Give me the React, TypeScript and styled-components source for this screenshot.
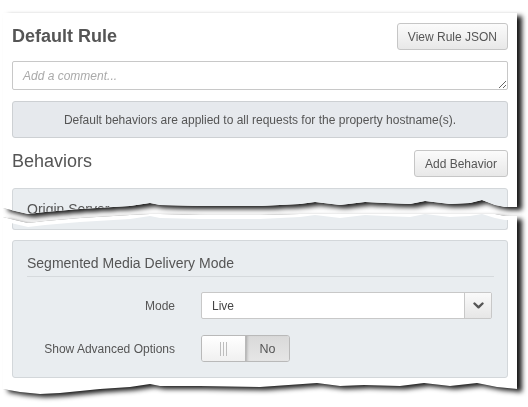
import styled, { createGlobalStyle } from "styled-components";

const GlobalStyle = createGlobalStyle`
  body {
    margin: 0;
    background: #fff;
    font-family: "Liberation Sans", Arial, sans-serif;
    color: #555;
  }
`;

// torn edge of the upper sheet, in page coordinates
const tear: [number, number][] = [
  [3, 208], [15, 211], [28, 214], [45, 212], [80, 209], [130, 206],
  [150, 203], [160, 205], [200, 206], [260, 206], [300, 204], [315, 202],
  [340, 205], [365, 202], [385, 203], [410, 204], [425, 201], [450, 204],
  [470, 203], [482, 200], [495, 205], [505, 207], [517, 207],
];

// torn edge at the bottom of the lower sheet
const bottomTear: [number, number][] = [
  [3, 389], [20, 392], [40, 394], [60, 393], [100, 389], [130, 387],
  [150, 384], [160, 386], [200, 386], [260, 387], [317, 383], [340, 386],
  [364, 385], [400, 386], [424, 383], [450, 386], [477, 383], [497, 387],
  [517, 389],
];

const pts = (list: [number, number][], dx: number, dy: number) =>
  list.map(([x, y]) => `${x - dx}px ${Math.max(0, y - dy)}px`);

const SHEET_LEFT = 3;
const TOP_SHEET_TOP = 13;
const LOWER_TOP = 214;

const topClip = `polygon(0px 0px, 514px 0px, ${pts(tear, SHEET_LEFT, TOP_SHEET_TOP)
  .reverse()
  .join(", ")})`;

const lowerClip = `polygon(${pts(tear, SHEET_LEFT, LOWER_TOP - 9).join(", ")}, ${pts(
  bottomTear,
  SHEET_LEFT,
  LOWER_TOP
)
  .reverse()
  .join(", ")})`;

const tailClip = `polygon(${pts(tear, 12, LOWER_TOP - 13).join(", ")}, 496px 16px, 0px 16px)`;

const Page = styled.div`
  width: 528px;
  height: 407px;
  box-sizing: border-box;
  padding: ${TOP_SHEET_TOP}px 0 0 ${SHEET_LEFT}px;
  overflow: hidden;
  display: flex;
  flex-direction: column;
`;

const SheetShadow = styled.div<{ $front?: boolean }>`
  width: 514px;
  flex-shrink: 0;
  position: relative;
  z-index: ${(p) => (p.$front ? 2 : 1)};
  filter: drop-shadow(0 0 0.7px rgba(0, 0, 0, 0.4))
    drop-shadow(5px 3px 2.5px rgba(0, 0, 0, 0.9));
`;

const Sheet = styled.div<{ $clip: string; $height: number }>`
  background: #fff;
  height: ${(p) => p.$height}px;
  box-sizing: border-box;
  padding: 0 9px;
  display: flex;
  flex-direction: column;
  overflow: hidden;
  clip-path: ${(p) => p.$clip};

  & > * {
    flex-shrink: 0;
  }
`;

const HeaderRow = styled.div<{ $top: number }>`
  display: flex;
  justify-content: space-between;
  align-items: center;
  height: 27px;
  margin-top: ${(p) => p.$top}px;
`;

const Title = styled.h1`
  margin: 0;
  font-size: 18px;
  font-weight: bold;
  color: #555;
`;

const SectionTitle = styled.h2`
  margin: 0 0 5px;
  font-size: 18px;
  font-weight: normal;
  color: #555;
`;

const Button = styled.button`
  height: 27px;
  padding: 0 10px;
  border: 1px solid #c6c6c6;
  border-radius: 3px;
  background: linear-gradient(#fbfbfb, #e8e8e8);
  font-family: "Liberation Sans", Arial, sans-serif;
  font-size: 12px;
  color: #555;
`;

const Comment = styled.textarea`
  display: block;
  box-sizing: border-box;
  width: 100%;
  height: 29px;
  min-height: 29px;
  margin-top: 11px;
  padding: 7px 10px;
  border: 1px solid #c8c8c8;
  border-radius: 2px;
  font-family: "Liberation Sans", Arial, sans-serif;
  font-size: 12px;
  color: #555;
  overflow: hidden;

  &::placeholder {
    color: #aaa;
    font-style: italic;
  }
`;

const Notice = styled.div`
  margin-top: 11px;
  height: 37px;
  box-sizing: border-box;
  display: flex;
  align-items: center;
  justify-content: center;
  background: #e6e9ed;
  border: 1px solid #cdd0d3;
  border-radius: 3px;
  font-size: 12px;
  color: #555;
`;

const Card = styled.div<{ $top: number }>`
  margin-top: ${(p) => p.$top}px;
  background: #e9edf0;
  border: 1px solid #d3d7da;
  border-radius: 3px;
  padding: 0 13px 15px 14px;
`;

const CardTail = styled.div<{ $clip: string }>`
  height: 16px;
  box-sizing: border-box;
  background: #e9edf0;
  border: 1px solid #d3d7da;
  border-top: none;
  border-radius: 0 0 3px 3px;
  clip-path: ${(p) => p.$clip};
`;

const CardTitle = styled.div<{ $top?: number }>`
  padding: ${(p) => p.$top ?? 14}px 0 4px;
  font-size: 14px;
  line-height: 17px;
  color: #555;
  border-bottom: 1px solid #d6dadd;
`;

const FieldRow = styled.div<{ $top: number }>`
  display: grid;
  grid-template-columns: 148px 1fr;
  column-gap: 26px;
  align-items: center;
  margin-top: ${(p) => p.$top}px;
  padding-right: 2px;
`;

const Label = styled.label`
  text-align: right;
  font-size: 12px;
  color: #555;
`;

const Select = styled.div`
  display: flex;
  height: 27px;
  box-sizing: border-box;
  border: 1px solid #c8c8c8;
  border-radius: 2px;
  background: #fff;
`;

const SelectValue = styled.div`
  flex: 1;
  display: flex;
  align-items: center;
  padding-left: 10px;
  font-size: 12px;
  color: #444;
`;

const SelectArrow = styled.div`
  width: 26px;
  display: flex;
  align-items: center;
  justify-content: center;
  border-left: 1px solid #c8c8c8;
  background: linear-gradient(#fafafa, #e6e6e6);
`;

const Toggle = styled.div`
  display: flex;
  width: 89px;
  height: 27px;
  box-sizing: border-box;
  border: 1px solid #b9b9b9;
  border-radius: 3px;
  overflow: hidden;
`;

const ToggleHandle = styled.div`
  width: 43px;
  display: flex;
  align-items: center;
  justify-content: center;
  background: linear-gradient(#ffffff, #f0f0f0);
  border-right: 1px solid #b9b9b9;
`;

const Grip = styled.span`
  width: 5px;
  height: 14px;
  border-left: 1px solid #bdbdbd;
  border-right: 1px solid #bdbdbd;
  background: linear-gradient(90deg, transparent 2px, #bdbdbd 2px, #bdbdbd 3px, transparent 3px);
`;

const ToggleState = styled.div`
  flex: 1;
  display: flex;
  align-items: center;
  justify-content: center;
  background: linear-gradient(#d9d9d9, #e6e6e6);
  box-shadow: inset 3px 0 3px -2px rgba(0, 0, 0, 0.25);
  font-size: 12.5px;
  color: #555;
`;

function Chevron() {
  return (
    <svg width="11" height="7" viewBox="0 0 11 7">
      <polyline
        points="1.5,1.5 5.5,5.3 9.5,1.5"
        fill="none"
        stroke="#555"
        strokeWidth="2.4"
        strokeLinecap="round"
        strokeLinejoin="round"
      />
    </svg>
  );
}

export default function App() {
  return (
    <Page>
      <GlobalStyle />
      <SheetShadow $front>
        <Sheet $clip={topClip} $height={LOWER_TOP - TOP_SHEET_TOP}>
          <HeaderRow $top={10}>
            <Title>Default Rule</Title>
            <Button>View Rule JSON</Button>
          </HeaderRow>
          <Comment placeholder="Add a comment..." />
          <Notice>
            Default behaviors are applied to all requests for the property hostname(s).
          </Notice>
          <HeaderRow $top={12}>
            <SectionTitle>Behaviors</SectionTitle>
            <Button>Add Behavior</Button>
          </HeaderRow>
          <Card $top={11}>
            <CardTitle $top={12}>Origin Server</CardTitle>
          </Card>
        </Sheet>
      </SheetShadow>
      <SheetShadow>
        <Sheet $clip={lowerClip} $height={180}>
          <CardTail $clip={tailClip} />
          <Card $top={10}>
            <CardTitle>Segmented Media Delivery Mode</CardTitle>
            <FieldRow $top={15}>
              <Label>Mode</Label>
              <Select>
                <SelectValue>Live</SelectValue>
                <SelectArrow>
                  <Chevron />
                </SelectArrow>
              </Select>
            </FieldRow>
            <FieldRow $top={16}>
              <Label>Show Advanced Options</Label>
              <Toggle>
                <ToggleHandle>
                  <Grip />
                </ToggleHandle>
                <ToggleState>No</ToggleState>
              </Toggle>
            </FieldRow>
          </Card>
        </Sheet>
      </SheetShadow>
    </Page>
  );
}
